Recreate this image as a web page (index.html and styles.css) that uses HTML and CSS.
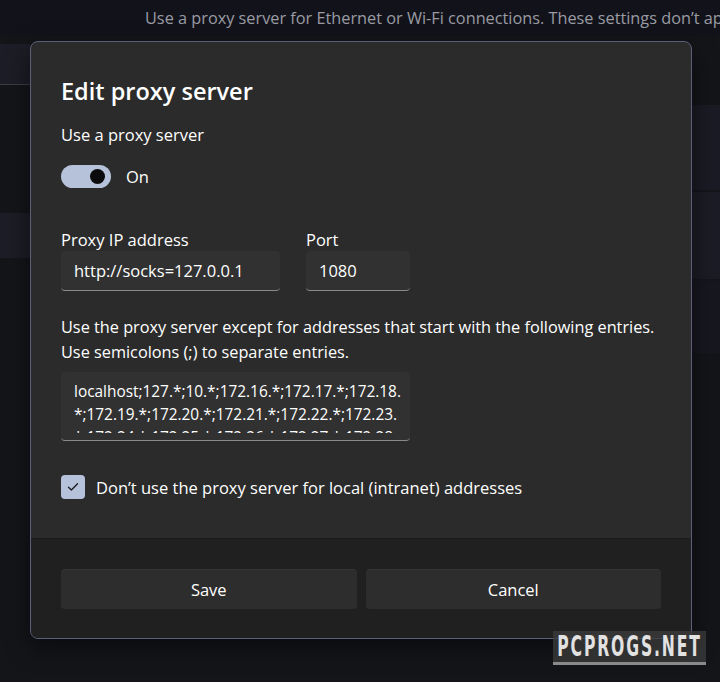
FILE: index.html
```html
<!DOCTYPE html>
<html lang="en">
<head>
    <meta charset="UTF-8">
    <meta name="viewport" content="width=device-width, initial-scale=1">
    <title>Edit proxy server</title>
    <link rel="stylesheet" href="styles.css">
</head>
<body>

    <!-- Settings page behind the dialog -->
    <div class="page">
        <p class="page-desc">Use a proxy server for Ethernet or Wi-Fi connections. These settings don’t apply to VPN connections.</p>
        <div class="page-cols">
            <div class="side side-left">
                <div class="band b1"></div>
                <div class="band b2"></div>
            </div>
            <div class="side side-right">
                <div class="band r1"></div>
                <div class="band r2"></div>
                <div class="band r3"></div>
            </div>
        </div>
    </div>

    <div class="dialog">
        <div class="dialog-body">
            <h2 class="dialog-title">Edit proxy server</h2>

            <div class="field-label">Use a proxy server</div>
            <div class="toggle-row">
                <span class="toggle"><span class="knob"></span></span>
                <span class="toggle-text">On</span>
            </div>

            <div class="addr-row">
                <div class="field ip">
                    <div class="field-label">Proxy IP address</div>
                    <div class="input">http://socks=127.0.0.1</div>
                </div>
                <div class="field port">
                    <div class="field-label">Port</div>
                    <div class="input">1080</div>
                </div>
            </div>

            <p class="except">Use the proxy server except for addresses that start with the following entries.<br>Use semicolons (;) to separate entries.</p>
            <div class="textarea">
                <div class="textarea-inner">localhost;127.*;10.*;172.16.*;172.17.*;172.18.<br>*;172.19.*;172.20.*;172.21.*;172.22.*;172.23.<br>*;172.24.*;172.25.*;172.26.*;172.27.*;172.28.</div>
            </div>

            <div class="check-row">
                <span class="checkbox">
                    <svg width="12" height="10" viewBox="0 0 12 10"><path d="M1.5 5.2 L4.4 8 L10.5 1.8" fill="none" stroke="#1b1b1f" stroke-width="1.3" stroke-linecap="round" stroke-linejoin="round"/></svg>
                </span>
                <span>Don’t use the proxy server for local (intranet) addresses</span>
            </div>
        </div>
        <div class="dialog-footer">
            <button class="btn">Save</button>
            <button class="btn">Cancel</button>
        </div>
    </div>

    <div class="watermark"><span>PCPROGS.NET</span></div>

</body>
</html>
```

FILE: styles.css
```css
body {
    margin: 0;
    width: 720px;
    height: 682px;
    background-color: #141519;
    font-family: "Open Sans", "Noto Sans", sans-serif;
    color: #ffffff;
    overflow: hidden;
    position: relative;
}

/* Background settings page */
.page {
    height: 100%;
    display: flex;
    flex-direction: column;
}

.page-desc {
    margin: 0;
    padding: 7px 0 0 145px;
    height: 36px;
    box-sizing: border-box;
    font-size: 16.3px;
    color: #9a9ba3;
    white-space: nowrap;
    overflow: hidden;
    background-color: #12131a;
}

.page-cols {
    flex: 1;
    display: flex;
    justify-content: space-between;
}

.side {
    width: 30px;
    display: flex;
    flex-direction: column;
}

.side-left {
    padding-top: 8px;
}

.side-right {
    padding-top: 69px;
    width: 28px;
}

.band {
    flex: none;
}

.b1 {
    height: 40px;
    background-color: #1c1d26;
    border-bottom: 1px solid #3b3c46;
}

.b2 {
    height: 45px;
    margin-top: 128px;
    background-color: #1c1d26;
}

.r1 {
    height: 85px;
    background-color: #1a1b24;
    border-bottom: 2px solid #15161c;
}

.r2 {
    height: 87px;
    background-color: #1c1c26;
    border-bottom: 2px solid #15161c;
}

.r3 {
    height: 72px;
    background-color: #17171f;
}

/* Dialog */
.dialog {
    position: absolute;
    left: 30px;
    top: 41px;
    width: 662px;
    height: 598px;
    box-sizing: border-box;
    border: 1px solid #5c5e7a;
    border-radius: 8px;
    background-color: #2b2b2b;
    overflow: hidden;
    display: flex;
    flex-direction: column;
    box-shadow: 0 8px 24px rgba(0, 0, 0, 0.5);
}

.dialog-body {
    flex: 1;
    padding: 0 30px;
}

.dialog-title {
    margin: 33px 0 0;
    font-size: 23.5px;
    font-weight: 600;
    line-height: 32px;
}

.field-label {
    font-size: 16.5px;
    line-height: 22px;
    color: #ffffff;
}

.dialog-title + .field-label {
    margin-top: 17px;
}

.toggle-row {
    display: flex;
    align-items: center;
    gap: 15px;
    margin-top: 18px;
    height: 24px;
}

.toggle {
    width: 50px;
    height: 23px;
    border-radius: 12px;
    background-color: #b6c2da;
    position: relative;
}

.knob {
    position: absolute;
    right: 6px;
    top: 4px;
    width: 15px;
    height: 15px;
    border-radius: 50%;
    background-color: #0b0b0d;
}

.toggle-text {
    font-size: 16.5px;
}

.addr-row {
    display: flex;
    gap: 26px;
    margin-top: 41px;
}

.input {
    height: 40px;
    box-sizing: border-box;
    padding: 0 13px;
    display: flex;
    align-items: center;
    font-size: 16.5px;
    background-color: #313131;
    border-radius: 4px;
    border-bottom: 1px solid #8a8a8a;
}

.ip .input {
    width: 219px;
}

.port .input {
    width: 104px;
}

.except {
    margin: 24px 0 0;
    font-size: 16.3px;
    line-height: 25px;
    white-space: nowrap;
}

.textarea {
    margin-top: 7px;
    width: 349px;
    height: 69px;
    box-sizing: border-box;
    background-color: #313131;
    border-radius: 4px;
    border-bottom: 1px solid #8a8a8a;
    padding: 8px 4px 0 13px;
    overflow: hidden;
}

.textarea-inner {
    height: 53px;
    overflow: hidden;
    font-size: 15.4px;
    line-height: 23px;
    white-space: nowrap;
}

.check-row {
    display: flex;
    align-items: center;
    gap: 11px;
    margin-top: 34px;
    font-size: 16.5px;
}

.checkbox {
    width: 24px;
    height: 24px;
    border-radius: 4px;
    background-color: #b6c2da;
    display: flex;
    align-items: center;
    justify-content: center;
}

.dialog-footer {
    height: 100px;
    border-top: 1px solid #1c1c1c;
    background-color: #202020;
    display: flex;
    gap: 9px;
    padding: 30px 30px 0;
    box-sizing: border-box;
}

.btn {
    flex: 1;
    height: 40px;
    border: none;
    border-radius: 4px;
    background-color: #2d2d2d;
    color: #ffffff;
    font-family: "Open Sans", "Noto Sans", sans-serif;
    font-size: 16.5px;
    border-top: 1px solid #353535;
}

/* Watermark */
.watermark {
    position: absolute;
    left: 553px;
    top: 631px;
    width: 153px;
    height: 34px;
    box-sizing: border-box;
    background-color: rgba(60, 60, 60, 0.75);
    border-bottom: 3px solid #8a8a8a;
    color: #e2e2e2;
    font-family: "DejaVu Sans Condensed", "DejaVu Sans", sans-serif;
    font-weight: bold;
    font-size: 28px;
    line-height: 31px;
    text-align: center;
    overflow: hidden;
}

.watermark span {
    display: inline-block;
    letter-spacing: 3px;
    transform: scaleX(0.62);
    transform-origin: center;
    white-space: nowrap;
    margin: 0 -80px;
}
```
